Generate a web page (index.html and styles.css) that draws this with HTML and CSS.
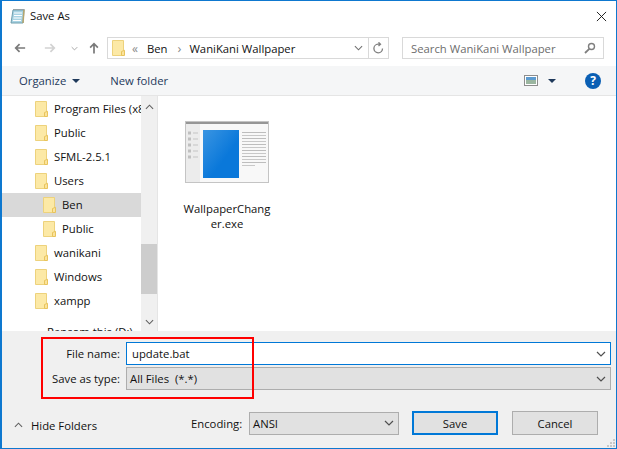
FILE: index.html
```html
<!DOCTYPE html>
<html lang="en">
<head>
    <meta charset="UTF-8">
    <title>Save As</title>
    <link rel="stylesheet" href="styles.css">
</head>
<body>
    <svg class="defs" width="0" height="0">
        <defs>
            <linearGradient id="wall" x1="0" y1="0" x2="1" y2="1">
                <stop offset="0" stop-color="#3a95e2"/>
                <stop offset=".6" stop-color="#0a78da"/>
            </linearGradient>
        </defs>
        <symbol id="folder" viewBox="0 0 13 16">
            <path d="M.5.5h11v15H.5z" fill="#fce9a6" stroke="#edd27c"/>
            <path d="M9.500 15.500v-4l3-1.200v5.200z" fill="#fbe39c" stroke="#e8c45c"/>
        </symbol>
        <symbol id="chev" viewBox="0 0 10 6">
            <path d="M1 1l4 4 4-4" fill="none" stroke="currentColor" stroke-width="1.2"/>
        </symbol>
    </svg>

    <div class="dialog">
        <!-- Title bar -->
        <div class="titlebar">
            <svg class="title-icon" width="16" height="16" viewBox="0 0 16 16">
                <path d="M3 2h11l-1 13H1z" fill="#a9d3e3" stroke="#6f9fae"/>
                <path d="M4 5h8M4 7.500h8M3.500 10h8M3 12.500h8" stroke="#fff"/>
                <path d="M3.500 1.500h11" stroke="#777" stroke-dasharray="1 1"/>
                <path d="M14 2l-1 13" stroke="#b7a56c" stroke-width="1.500"/>
            </svg>
            <span class="title-text">Save As</span>
            <svg class="close" width="11" height="11" viewBox="0 0 12 12">
                <path d="M1 1l10 10M11 1L1 11" stroke="#111" stroke-width="1"/>
            </svg>
        </div>

        <!-- Back / forward, address, search -->
        <div class="navbar">
            <svg class="nav-btn" width="12" height="12" viewBox="0 0 14 12">
                <path d="M13 6H2M6.500 1.500L2 6l4.500 4.500" fill="none" stroke="#7a7a7a" stroke-width="2"/>
            </svg>
            <svg class="nav-btn forward" width="12" height="12" viewBox="0 0 14 12">
                <path d="M1 6h11M7.500 1.500L12 6l-4.500 4.500" fill="none" stroke="#d2d2d2" stroke-width="2"/>
            </svg>
            <svg class="nav-drop" width="7" height="5"><use href="#chev"/></svg>
            <svg class="nav-btn up" width="12" height="12" viewBox="0 0 12 14">
                <path d="M6 13.500V2M1.500 6.500L6 2l4.500 4.500" fill="none" stroke="#7a7a7a" stroke-width="2"/>
            </svg>

            <div class="address">
                <svg class="addr-folder" width="13" height="16"><use href="#folder"/></svg>
                <span class="crumb-more">«</span>
                <span class="crumb">Ben</span>
                <span class="crumb-sep">›</span>
                <span class="crumb">WaniKani Wallpaper</span>
                <svg class="addr-drop" width="9" height="6"><use href="#chev"/></svg>
                <div class="refresh">
                    <svg width="11" height="12" viewBox="0 0 11 12">
                        <path d="M9.500 6.500A4.300 4.300 0 1 1 5 2.200H7M5.500.3L7.500 2.200 5.500 4" fill="none" stroke="#808080" stroke-width="1.300"/>
                    </svg>
                </div>
            </div>

            <div class="search">
                <span>Search WaniKani Wallpaper</span>
                <svg width="12" height="12" viewBox="0 0 12 12">
                    <circle cx="7.500" cy="4.500" r="3" fill="none" stroke="#7f7f7f" stroke-width="1.400"/>
                    <path d="M5.300 6.800L1 11" stroke="#7f7f7f" stroke-width="1.800"/>
                </svg>
            </div>
        </div>

        <!-- Toolbar -->
        <div class="toolbar">
            <span class="tool">Organize</span>
            <span class="caret"></span>
            <span class="tool new-folder">New folder</span>
            <svg class="view-icon" width="14" height="11" viewBox="0 0 14 11">
                <rect x=".5" y=".5" width="13" height="10" fill="#fff" stroke="#8d8d8d"/>
                <rect x="2" y="2" width="10" height="3" fill="#5c9bd0"/>
                <rect x="2" y="5" width="10" height="4" fill="#9bb6a0"/>
            </svg>
            <span class="caret view-caret"></span>
            <span class="help">?</span>
        </div>

        <!-- Folder tree and file list -->
        <div class="main">
            <div class="sidebar">
                <div class="tree">
                    <div class="row"><svg width="13" height="16"><use href="#folder"/></svg><span>Program Files (x86)</span></div>
                    <div class="row"><svg width="13" height="16"><use href="#folder"/></svg><span>Public</span></div>
                    <div class="row"><svg width="13" height="16"><use href="#folder"/></svg><span>SFML-2.5.1</span></div>
                    <div class="row"><svg width="13" height="16"><use href="#folder"/></svg><span>Users</span></div>
                    <div class="row nested selected"><svg width="13" height="16"><use href="#folder"/></svg><span>Ben</span></div>
                    <div class="row nested"><svg width="13" height="16"><use href="#folder"/></svg><span>Public</span></div>
                    <div class="row"><svg width="13" height="16"><use href="#folder"/></svg><span>wanikani</span></div>
                    <div class="row"><svg width="13" height="16"><use href="#folder"/></svg><span>Windows</span></div>
                    <div class="row"><svg width="13" height="16"><use href="#folder"/></svg><span>xampp</span></div>
                    <div class="row drive"><span>Ransom this (D:)</span></div>
                </div>
                <div class="scrollbar">
                    <svg class="sb-up" width="9" height="6"><use href="#chev"/></svg>
                    <div class="thumb"></div>
                    <svg class="sb-down" width="9" height="6"><use href="#chev"/></svg>
                </div>
            </div>
            <div class="files">
                <div class="file">
                    <svg class="exe" width="84" height="62" viewBox="0 0 84 62">
                        <rect width="84" height="62" fill="#f8f8f8"/>
                        <rect width="84" height="3" fill="#969696"/>
                        <rect y="3" width="15" height="59" fill="#ececec"/>
                        <rect x=".5" y=".5" width="83" height="61" fill="none" stroke="#c4c4c4"/>
                        <rect x="18" y="9" width="36" height="48" fill="url(#wall)"/>
                        <path d="M3 12h3M3 18h3M3 24h3M3 30h3M3 36h3" stroke="#c0c0c0" stroke-width="3"/>
                        <path d="M8 12h5M8 18h5M8 24h5M8 30h5M8 36h5" stroke="#c4c4c4"/>
                        <path d="M57 11.500h24M57 17.500h24M57 23.500h24M57 29.500h24M57 35.500h24M57 41.500h24" stroke="#bdbdbd"/>
                        <path d="M57 14.500h24M57 20.500h24M57 26.500h24M57 32.500h24M57 38.500h24M57 44.500h13" stroke="#c8c8c8"/>
                    </svg>
                    <div class="file-name">WallpaperChang<br>er.exe</div>
                </div>
            </div>
        </div>

        <!-- File name, type, buttons -->
        <div class="bottom">
            <div class="field">
                <label>File name:</label>
                <div class="combo focus"><span class="value name-value">update.bat</span><svg width="10" height="6"><use href="#chev"/></svg></div>
            </div>
            <div class="field">
                <label>Save as type:</label>
                <div class="combo"><span class="value">All Files&nbsp; (*.*)</span><svg width="10" height="6"><use href="#chev"/></svg></div>
            </div>
            <div class="actions">
                <div class="hide-folders">
                    <svg class="hide-up" width="9" height="6"><use href="#chev"/></svg>
                    <span>Hide Folders</span>
                </div>
                <label class="enc-label">Encoding:</label>
                <div class="combo encoding"><span class="value">ANSI</span><svg width="10" height="6"><use href="#chev"/></svg></div>
                <div class="btn primary">Save</div>
                <div class="btn">Cancel</div>
            </div>
            <svg class="grip" width="9" height="9" viewBox="0 0 9 9">
                <path d="M7 0h2v2H7zM4 3h2v2H4zM7 3h2v2H7zM1 6h2v2H1zM4 6h2v2H4zM7 6h2v2H7z" fill="#c8c8c8"/>
            </svg>
        </div>

        <div class="annotation"></div>
    </div>
</body>
</html>
```

FILE: styles.css
```css
* {
    box-sizing: border-box;
}

html, body {
    margin: 0;
    padding: 0;
    background: #fff;
}

body {
    font-family: "Open Sans", "Noto Sans", sans-serif;
    font-size: 11.3px;
    color: #111;
}

.defs {
    position: absolute;
}

svg {
    display: block;
    flex: none;
}

.dialog {
    position: relative;
    width: 617px;
    height: 449px;
    display: flex;
    flex-direction: column;
    border: 1px solid #0e78cf;
    border-left-width: 2px;
    background: #fff;
    overflow: hidden;
}

/* Title bar */
.titlebar {
    height: 30px;
    display: flex;
    align-items: center;
    padding-left: 8px;
}

.title-text {
    margin-left: 4px;
    margin-top: -2px;
}

.close {
    margin-left: auto;
    margin-right: 9px;
}

/* Navigation */
.navbar {
    height: 35px;
    display: flex;
    align-items: center;
    padding-bottom: 1px;
}

.nav-btn {
    margin-left: 12px;
}

.forward {
    margin-left: 18px;
}

.nav-drop {
    margin-left: 15px;
    color: #9a9a9a;
}

.up {
    margin-left: 10px;
}

.address {
    width: 282px;
    height: 22px;
    margin-left: 7px;
    display: flex;
    align-items: center;
    border: 1px solid #d9d9d9;
    padding-left: 4px;
}

.crumb-more {
    margin-left: 7px;
    color: #8a8a8a;
    font-size: 12px;
}

.crumb {
    margin-left: 9px;
}

.crumb-sep {
    margin-left: 10px;
    color: #8a8a8a;
    font-size: 13px;
    line-height: 1;
}

.crumb-sep + .crumb {
    margin-left: 8px;
}

.addr-drop {
    margin-left: auto;
    margin-right: 5px;
    color: #707070;
}

.refresh {
    width: 20px;
    height: 100%;
    border-left: 1px solid #d9d9d9;
    display: flex;
    align-items: center;
    justify-content: center;
}

.search {
    width: 202px;
    height: 22px;
    margin-left: 13px;
    display: flex;
    align-items: center;
    justify-content: space-between;
    border: 1px solid #d9d9d9;
    padding: 0 7px 0 8px;
    color: #6d6d6d;
}

/* Toolbar */
.toolbar {
    height: 30px;
    display: flex;
    align-items: center;
    background: #f5f6f7;
    border-bottom: 1px solid #e5e5e5;
    padding-left: 17px;
    color: #1e395b;
}

.caret {
    width: 0;
    height: 0;
    margin-left: 6px;
    border-left: 4px solid transparent;
    border-right: 4px solid transparent;
    border-top: 4px solid #1e395b;
}

.new-folder {
    margin-left: 30px;
}

.view-icon {
    margin-left: auto;
}

.view-caret {
    margin-left: 10px;
}

.help {
    width: 16px;
    height: 16px;
    margin-left: 29px;
    margin-right: 15px;
    border-radius: 50%;
    background: #0a5fb4;
    color: #fff;
    font-weight: 700;
    font-size: 12px;
    line-height: 16px;
    text-align: center;
}

/* Tree and files */
.main {
    height: 235px;
    display: flex;
}

.sidebar {
    width: 156px;
    display: flex;
    border-right: 1px solid #e5e5e5;
    overflow: hidden;
}

.tree {
    width: 139px;
    flex: none;
    overflow: hidden;
    padding-top: 1px;
}

.row {
    height: 24px;
    display: flex;
    align-items: center;
    padding-left: 33px;
    white-space: nowrap;
    overflow: hidden;
}

.row span {
    margin-left: 6px;
    margin-top: -2px;
}

.nested {
    padding-left: 41px;
}

.selected {
    background: #d9d9d9;
}

.drive {
    padding-left: 7px;
    margin-top: 7px;
}

.drive span {
    margin-left: 38px;
}

.scrollbar {
    width: 17px;
    flex: none;
    background: #f0f0f0;
    display: flex;
    flex-direction: column;
    align-items: center;
    color: #606060;
}

.sb-up {
    margin-top: 8px;
    transform: rotate(180deg);
}

.thumb {
    width: 17px;
    height: 50px;
    margin-top: 134px;
    background: #cdcdcd;
}

.sb-down {
    margin-top: 25px;
}

.files {
    flex: 1;
    padding: 25px 0 0 21px;
}

.file {
    width: 96px;
    display: flex;
    flex-direction: column;
    align-items: center;
}

.file-name {
    margin-top: 18px;
    text-align: center;
    line-height: 15px;
}

/* Bottom panel */
.bottom {
    flex: 1;
    position: relative;
    background: #f0f0f0;
    padding-top: 11px;
}

.field {
    height: 23px;
    margin-bottom: 2px;
    display: flex;
    align-items: center;
}

.field label {
    width: 124px;
    text-align: right;
    padding-right: 6px;
}

.combo {
    width: 485px;
    height: 23px;
    display: flex;
    align-items: center;
    justify-content: space-between;
    border: 1px solid #adadad;
    background: #e1e1e1;
    padding: 0 4px 0 3px;
    color: #505050;
}

.combo .value {
    color: #111;
}

.focus {
    border-color: #0078d7;
    background: #fff;
}

.name-value {
    margin-left: 2px;
}

.actions {
    height: 24px;
    margin-top: 21px;
    display: flex;
    align-items: center;
}

.hide-folders {
    display: flex;
    align-items: center;
    width: 189px;
    padding-left: 12px;
    margin-top: 4px;
}

.hide-up {
    transform: rotate(180deg);
    color: #606060;
}

.hide-folders span {
    margin-left: 8px;
}

.enc-label {
    width: 58px;
}

.encoding {
    width: 150px;
}

.btn {
    width: 86px;
    height: 24px;
    margin-left: 13px;
    display: flex;
    align-items: center;
    justify-content: center;
    border: 1px solid #adadad;
    background: #e1e1e1;
}

.btn.primary {
    border: 2px solid #0078d7;
}

.btn + .btn {
    margin-left: 14px;
}

.grip {
    position: absolute;
    right: 1px;
    bottom: 0;
}

/* Red highlight drawn over the screenshot */
.annotation {
    position: absolute;
    left: 39px;
    top: 336px;
    width: 213px;
    height: 62px;
    border: 2px solid #f00;
}
```
